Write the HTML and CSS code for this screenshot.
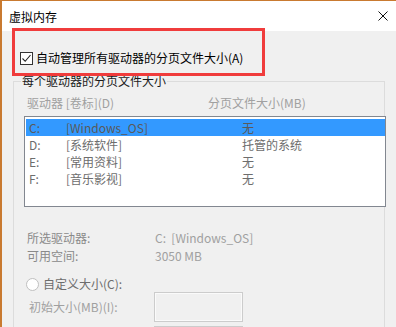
FILE: index.html
```html
<!DOCTYPE html>
<html lang="zh-CN">
<head>
  <meta charset="utf-8">
  <title>虚拟内存</title>
  <link rel="stylesheet" href="styles.css">
</head>
<body>
  <div class="window">
    <div class="titlebar">
      <span class="title">虚拟内存</span>
      <svg class="close" width="10" height="10" viewBox="0 0 10 10">
        <path d="M0.5 0.5 L9.5 9.5 M9.5 0.5 L0.5 9.5" stroke="#111" stroke-width="1" fill="none"/>
      </svg>
    </div>
    <div class="content">
      <label class="auto-row">
        <span class="checkbox">
          <svg width="11" height="11" viewBox="0 0 11 11">
            <path d="M1.5 5.5 L4.2 8.3 L9.5 2" stroke="#222" stroke-width="1.1" fill="none"/>
          </svg>
        </span>
        自动管理所有驱动器的分页文件大小(A)
      </label>

      <fieldset class="group">
        <legend>每个驱动器的分页文件大小</legend>
        <div class="list-head">
          <span>驱动器 [卷标](D)</span>
          <span>分页文件大小(MB)</span>
        </div>
        <div class="listbox">
          <div class="row selected"><span>C:</span><span>[Windows_OS]</span><span>无</span></div>
          <div class="row"><span>D:</span><span>[系统软件]</span><span>托管的系统</span></div>
          <div class="row"><span>E:</span><span>[常用资料]</span><span>无</span></div>
          <div class="row"><span>F:</span><span>[音乐影视]</span><span>无</span></div>
        </div>

        <div class="info">
          <span class="key">所选驱动器:</span><span class="val">C:&nbsp; [Windows_OS]</span>
          <span class="key">可用空间:</span><span class="val">3050 MB</span>
        </div>

        <label class="radio-row">
          <span class="radio"></span>
          自定义大小(C):
        </label>
        <div class="size-row">
          <span class="size-label">初始大小(MB)(I):</span>
          <span class="edit"></span>
        </div>
        <div class="size-row">
          <span class="size-label"></span>
          <span class="edit"></span>
        </div>
      </fieldset>
    </div>
    <div class="highlight"></div>
  </div>
</body>
</html>
```

FILE: styles.css
```css
body {
    margin: 0;
    font-family: "Noto Sans CJK SC", "Noto Sans", sans-serif;
    font-size: 12px;
    background: #f0f0f0;
}
.window {
    position: relative;
    width: 394px;
    height: 326px;
    overflow: hidden;
    border-top: 1px solid #c97a30;
    border-left: 2px solid #c97a30;
    background: #f0f0f0;
}
.titlebar {
    height: 30px;
    background: #fff;
    display: flex;
    align-items: center;
    justify-content: space-between;
    padding: 0 8px 0 7px;
}
.title {
    color: #000;
    line-height: 16px;
    margin-top: 2px;
}
.content {
    padding-top: 19px;
}
.auto-row {
    display: flex;
    align-items: center;
    gap: 3px;
    margin-left: 18px;
    line-height: 16px;
    color: #000;
}
.checkbox {
    width: 11px;
    height: 11px;
    border: 1px solid #333;
    background: #fff;
    display: flex;
}
.group {
    margin: 7px 0 0 11px;
    padding: 0;
    width: 370px;
    min-width: 0;
    height: 300px;
    border: 1px solid #dcdcdc;
}
.group legend {
    margin-left: 7px;
    padding: 0 1px;
    line-height: 16px;
    color: #1a1a1a;
}
.list-head {
    display: flex;
    margin: 6px 0 0 13px;
    line-height: 16px;
    color: #a0a0a0;
}
.list-head span:first-child {
    width: 181px;
}
.listbox {
    margin: 5px 0 0 10px;
    padding: 2px 0 0 1px;
    box-sizing: border-box;
    width: 362px;
    height: 91px;
    border: 1px solid #828790;
    background: #fff;
    color: #6d6d6d;
}
.row {
    display: grid;
    grid-template-columns: 37px 176px 1fr;
    height: 17px;
    line-height: 17px;
    padding-left: 3px;
}
.row.selected {
    background: #3399ff;
    color: #5a5a5a;
}
.info {
    display: grid;
    grid-template-columns: 128px 1fr;
    margin: 22px 0 0 13px;
    line-height: 18px;
}
.info .key {
    color: #8a8a8a;
}
.info .val {
    color: #a0a0a0;
}
.radio-row {
    display: flex;
    align-items: center;
    gap: 4px;
    margin: 11px 0 0 12px;
    line-height: 16px;
    color: #6d6d6d;
}
.radio {
    width: 11px;
    height: 11px;
    border: 1px solid #c0c0c0;
    border-radius: 50%;
    background: #fff;
}
.size-row {
    display: flex;
    align-items: center;
    margin-left: 15px;
    height: 30px;
    margin-bottom: 4px;
}
.size-label {
    width: 125px;
    color: #a0a0a0;
    line-height: 16px;
}
.edit {
    width: 87px;
    height: 28px;
    border: 1px solid #cccccc;
    box-shadow: inset 0 0 0 1px #fafafa;
}
.highlight {
    position: absolute;
    left: 10px;
    top: 27px;
    width: 247px;
    height: 42px;
    border: 3px solid #f03c3c;
}
```
